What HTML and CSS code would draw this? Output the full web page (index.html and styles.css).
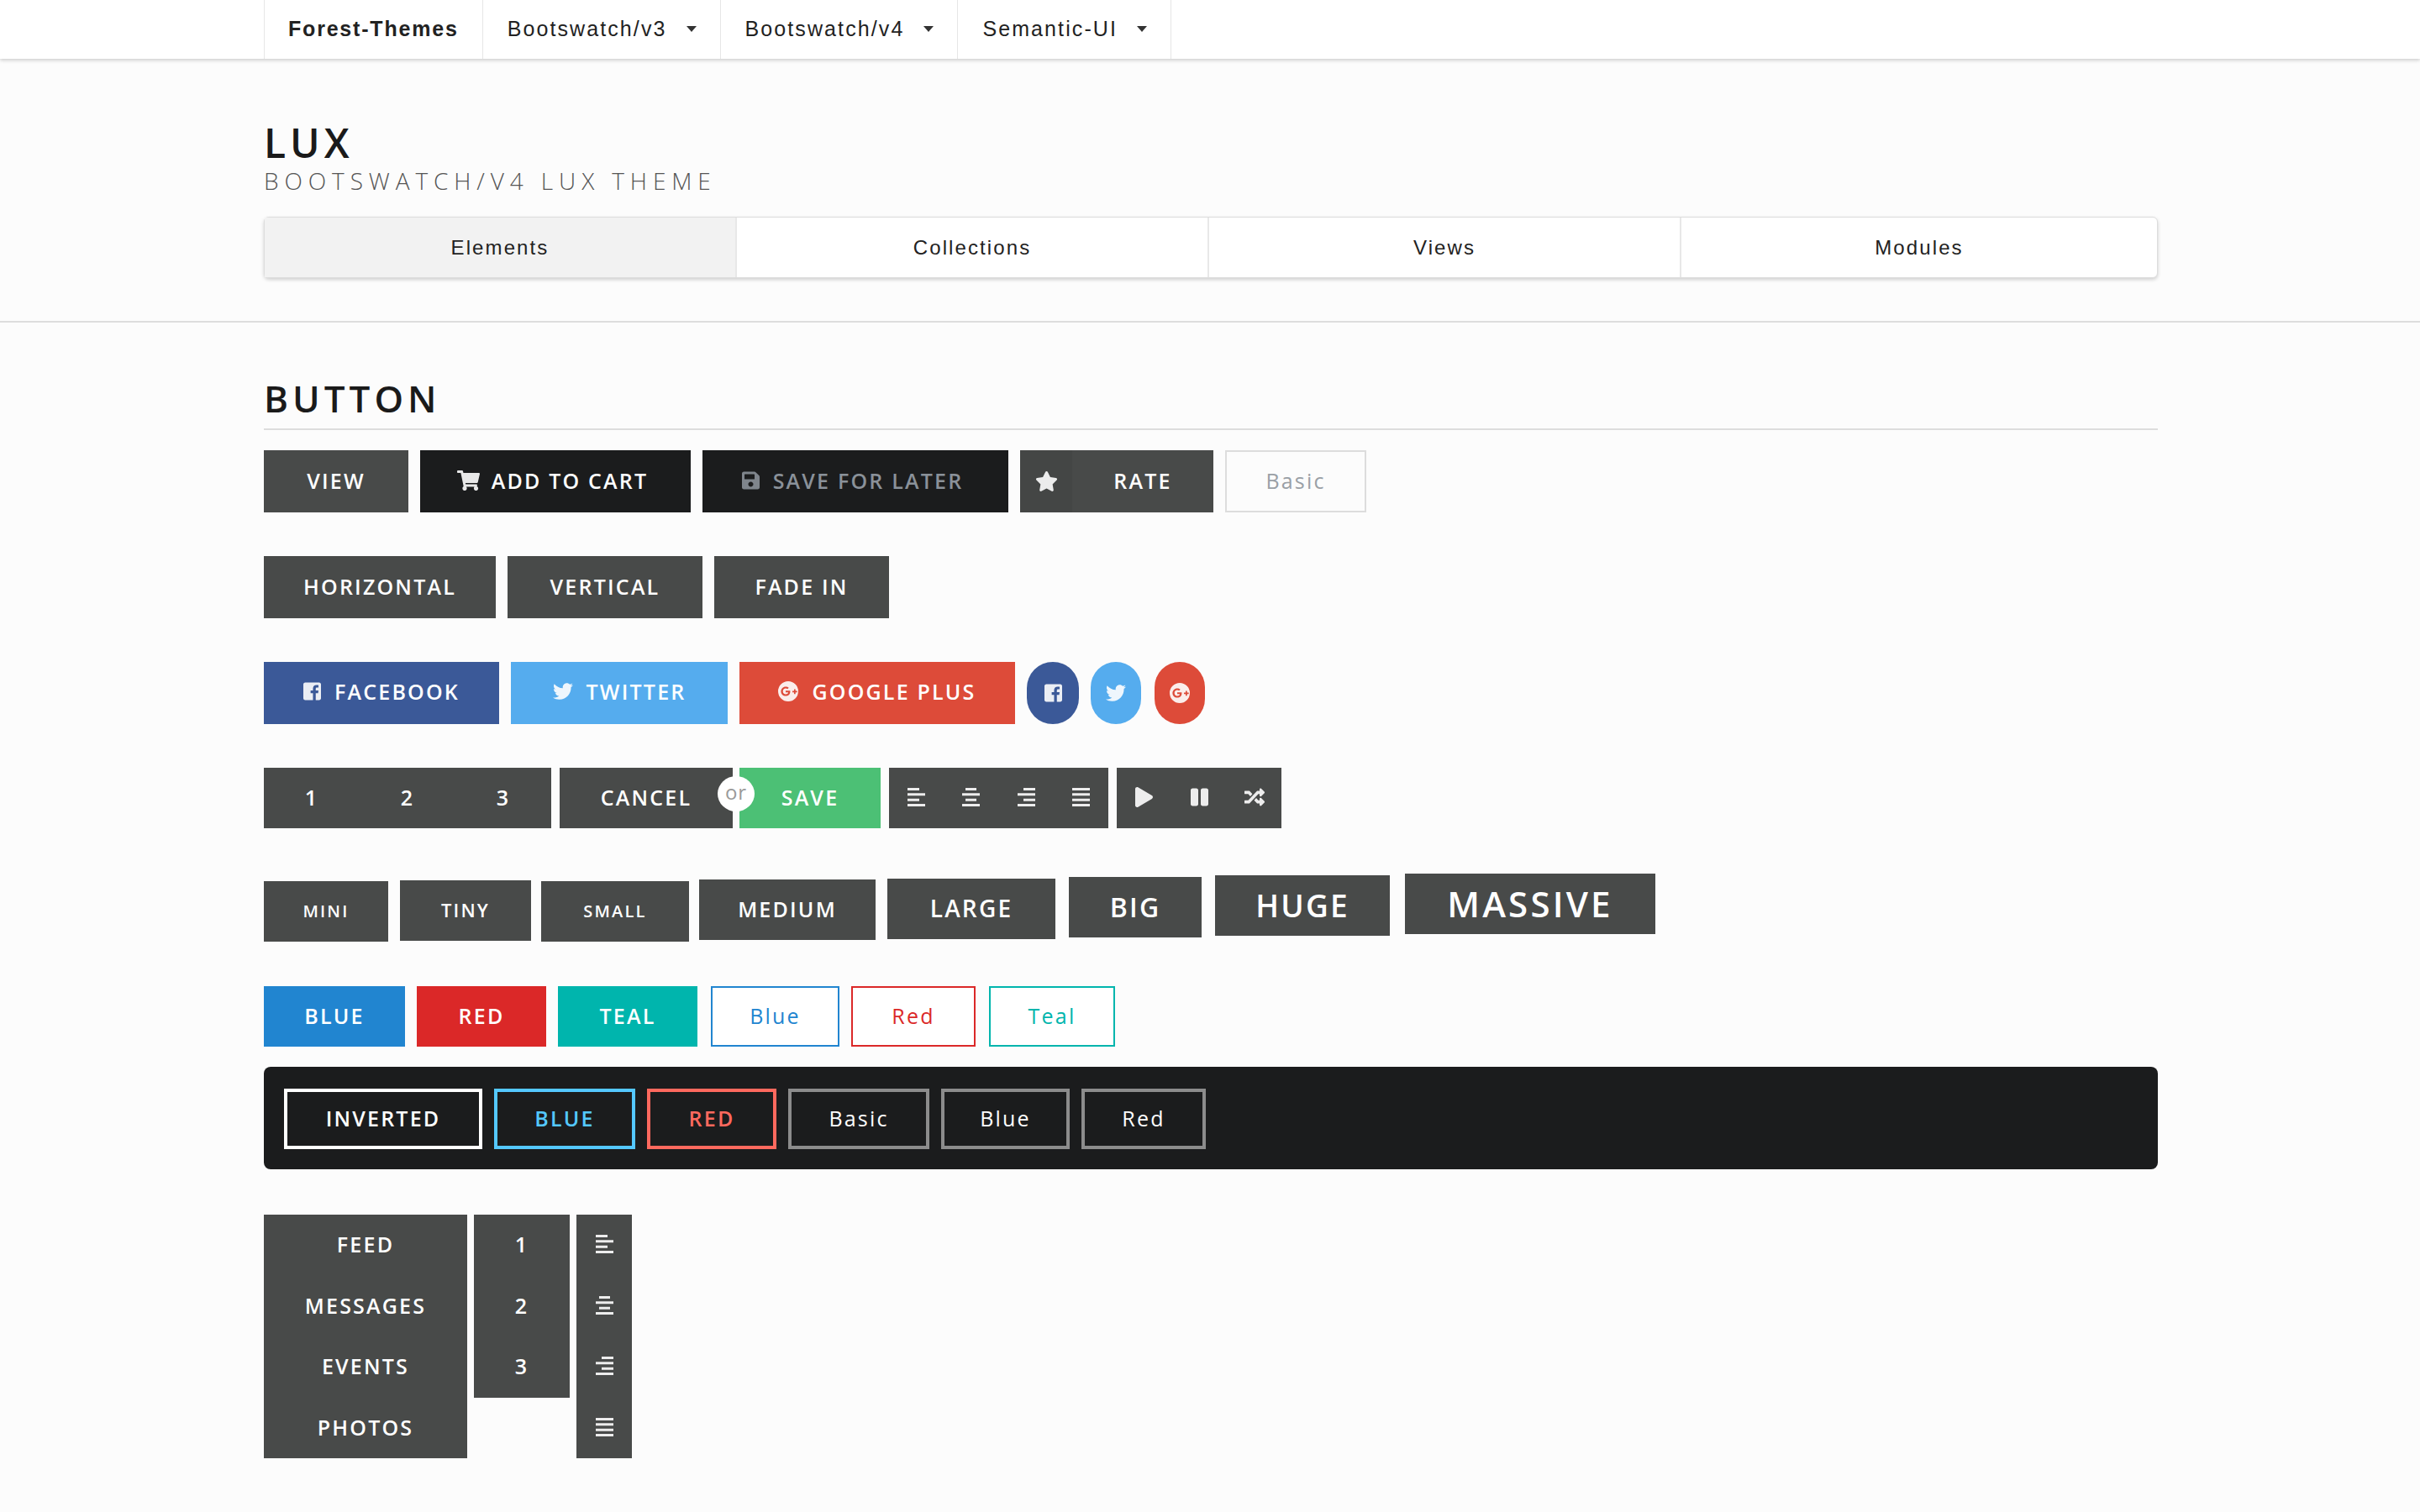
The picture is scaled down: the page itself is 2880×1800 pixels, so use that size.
FILE: index.html
```html
<!DOCTYPE html>
<html lang="en">
<head>
    <meta charset="UTF-8">
    <title>Lux - Bootswatch/v4 theme</title>
    <link rel="stylesheet" href="styles.css">
</head>
<body>
    <svg class="defs" width="0" height="0">
        <symbol id="i-cart" viewBox="0 0 576 512"><path d="M528.12 301.319l47.273-208C578.806 78.301 567.391 64 551.99 64H159.208l-9.166-44.81C147.758 8.021 137.93 0 126.529 0H24C10.745 0 0 10.745 0 24v16c0 13.255 10.745 24 24 24h69.883l70.248 343.435C147.325 417.1 136 435.222 136 456c0 30.928 25.072 56 56 56s56-25.072 56-56c0-15.674-6.447-29.835-16.824-40h209.647C430.447 426.165 424 440.326 424 456c0 30.928 25.072 56 56 56s56-25.072 56-56c0-22.172-12.888-41.332-31.579-50.405l5.517-24.276c3.413-15.018-8.002-29.319-23.403-29.319H218.117l-6.545-32h293.145c11.206 0 20.92-7.754 23.403-18.681z"/></symbol>
        <symbol id="i-save" viewBox="0 0 448 512"><path d="M433.941 129.941l-83.882-83.882A48 48 0 0 0 316.118 32H48C21.49 32 0 53.49 0 80v352c0 26.51 21.49 48 48 48h352c26.51 0 48-21.49 48-48V163.882a48 48 0 0 0-14.059-33.941zM224 416c-35.346 0-64-28.654-64-64 0-35.346 28.654-64 64-64s64 28.654 64 64c0 35.346-28.654 64-64 64zm96-304.52V212c0 6.627-5.373 12-12 12H76c-6.627 0-12-5.373-12-12V108c0-6.627 5.373-12 12-12h228.52c3.183 0 6.235 1.264 8.485 3.515l3.48 3.48A11.996 11.996 0 0 1 320 111.48z"/></symbol>
        <symbol id="i-star" viewBox="0 0 576 512"><path d="M259.3 17.8L194 150.2 47.9 171.5c-26.2 3.8-36.7 36.1-17.7 54.6l105.7 103-25 145.5c-4.5 26.3 23.2 46 46.4 33.7L288 439.6l130.7 68.7c23.2 12.2 50.9-7.4 46.4-33.7l-25-145.5 105.7-103c19-18.5 8.5-50.8-17.7-54.6L382 150.2 316.7 17.8c-11.7-23.6-45.6-23.9-57.4 0z"/></symbol>
        <symbol id="i-fb" viewBox="0 0 448 512"><path d="M448 80v352c0 26.5-21.5 48-48 48h-85.3V302.8h60.6l8.7-67.6h-69.3V192c0-19.6 5.4-32.9 33.5-32.9H384V98.7c-6.2-.8-27.4-2.7-52.2-2.7-51.6 0-87 31.5-87 89.4v49.9H184v67.6h60.9V480H48c-26.5 0-48-21.5-48-48V80c0-26.5 21.5-48 48-48h352c26.5 0 48 21.5 48 48z"/></symbol>
        <symbol id="i-tw" viewBox="0 0 512 512"><path d="M459.37 151.716c.325 4.548.325 9.097.325 13.645 0 138.72-105.583 298.558-298.558 298.558-59.452 0-114.68-17.219-161.137-47.106 8.447.974 16.568 1.299 25.34 1.299 49.055 0 94.213-16.568 130.274-44.832-46.132-.975-84.792-31.188-98.112-72.772 6.498.974 12.995 1.624 19.818 1.624 9.421 0 18.843-1.3 27.614-3.573-48.081-9.747-84.143-51.98-84.143-102.985v-1.299c13.969 7.797 30.214 12.67 47.431 13.319-28.264-18.843-46.781-51.005-46.781-87.391 0-19.492 5.197-37.36 14.294-52.954 51.655 63.675 129.3 105.258 216.365 109.807-1.624-7.797-2.599-15.918-2.599-24.04 0-57.828 46.782-104.934 104.934-104.934 30.213 0 57.502 12.67 76.67 33.137 23.715-4.548 46.456-13.32 66.599-25.34-7.798 24.366-24.366 44.833-46.132 57.827 21.117-2.273 41.584-8.122 60.426-16.243-14.292 20.791-32.161 39.308-52.628 54.253z"/></symbol>
        <symbol id="i-gp" viewBox="0 0 24 24"><path fill-rule="evenodd" d="M12 0a12 12 0 1 0 0 24a12 12 0 0 0 0-24zM9 6.4c1.5 0 2.7.5 3.7 1.4l-1.500 1.500c-.6-.5-1.300-.8-2.200-.8-1.800 0-3.300 1.500-3.300 3.500s1.500 3.500 3.300 3.500c1.800 0 2.800-1 3-2.300H9v-2h5.300c.1.300.1.600.1 1 0 3.300-2.200 5.400-5.400 5.400-3.100 0-5.600-2.500-5.600-5.600S5.900 6.400 9 6.400zM19 9.500h1.700v2h2v1.700h-2v2H19v-2h-2v-1.700h2z"/></symbol>
        <symbol id="i-left" viewBox="0 0 21 22"><path d="M0 0h14v3H0zM0 6.300h21v3H0zM0 12.700h14v3H0zM0 19h21v3H0z"/></symbol>
        <symbol id="i-center" viewBox="0 0 21 22"><path d="M4 0h13v3H4zM0 6.300h21v3H0zM4 12.700h13v3H4zM0 19h21v3H0z"/></symbol>
        <symbol id="i-right" viewBox="0 0 21 22"><path d="M7 0h14v3H7zM0 6.300h21v3H0zM7 12.700h14v3H7zM0 19h21v3H0z"/></symbol>
        <symbol id="i-just" viewBox="0 0 21 22"><path d="M0 0h21v3H0zM0 6.300h21v3H0zM0 12.700h21v3H0zM0 19h21v3H0z"/></symbol>
        <symbol id="i-play" viewBox="0 0 448 512"><path d="M424.4 214.700L72.400 6.600C43.800-10.300 0 6.100 0 47.900V464c0 37.500 40.700 60.100 72.400 41.300l352-208c31.400-18.500 31.500-64.100 0-82.600z"/></symbol>
        <symbol id="i-pause" viewBox="0 0 448 512"><path d="M144 479H48c-26.500 0-48-21.500-48-48V79c0-26.500 21.500-48 48-48h96c26.500 0 48 21.500 48 48v352c0 26.500-21.500 48-48 48zm304-48V79c0-26.500-21.500-48-48-48h-96c-26.500 0-48 21.500-48 48v352c0 26.500 21.500 48 48 48h96c26.500 0 48-21.500 48-48z"/></symbol>
        <symbol id="i-shuffle" viewBox="0 0 512 512"><path d="M504.971 359.029c9.373 9.373 9.373 24.569 0 33.941l-80 79.984c-15.01 15.01-40.971 4.49-40.971-16.971V416h-58.785a12.004 12.004 0 0 1-8.773-3.812l-70.556-75.596 53.333-57.143L352 336h32v-39.981c0-21.438 25.943-31.998 40.971-16.971l80 79.981zM12 176h84l52.781 56.551 53.333-57.143-70.556-75.596A11.999 11.999 0 0 0 122.785 96H12c-6.627 0-12 5.373-12 12v56c0 6.627 5.373 12 12 12zm372 0v39.984c0 21.46 25.961 31.98 40.971 16.971l80-79.984c9.373-9.373 9.373-24.569 0-33.941l-80-79.981C409.943 24.021 384 34.582 384 56.019V96h-58.785a12.004 12.004 0 0 0-8.773 3.812L96 336H12c-6.627 0-12 5.373-12 12v56c0 6.627 5.373 12 12 12h110.785c3.326 0 6.503-1.381 8.773-3.812L352 176h32z"/></symbol>
    </svg>

    <nav class="topbar">
        <div class="topbar-inner">
            <a class="nav-item brand">Forest-Themes</a>
            <a class="nav-item">Bootswatch/v3<span class="caret"></span></a>
            <a class="nav-item">Bootswatch/v4<span class="caret"></span></a>
            <a class="nav-item">Semantic-UI<span class="caret"></span></a>
        </div>
    </nav>

    <header class="masthead">
        <div class="container">
            <h1>LUX</h1>
            <p class="subtitle">BOOTSWATCH/V4 LUX THEME</p>
            <div class="tabs">
                <a class="tab active">Elements</a>
                <a class="tab">Collections</a>
                <a class="tab">Views</a>
                <a class="tab">Modules</a>
            </div>
        </div>
    </header>

    <main class="container">
        <h2 class="section-title">BUTTON</h2>

        <div class="row">
            <a class="btn w172">VIEW</a>
            <a class="btn w322 black"><svg class="icon wide"><use href="#i-cart"/></svg>ADD TO CART</a>
            <a class="btn w364 black muted"><svg class="icon"><use href="#i-save"/></svg>SAVE FOR LATER</a>
            <a class="btn w230 labeled"><span class="label-box"><svg class="icon wide"><use href="#i-star"/></svg></span><span class="label-text">RATE</span></a>
            <a class="btn w168 basic">Basic</a>
        </div>

        <div class="row">
            <a class="btn w276">HORIZONTAL</a>
            <a class="btn w232">VERTICAL</a>
            <a class="btn w208">FADE IN</a>
        </div>

        <div class="row social">
            <a class="btn w280 facebook"><svg class="icon"><use href="#i-fb"/></svg>FACEBOOK</a>
            <a class="btn w258 twitter"><svg class="icon mid"><use href="#i-tw"/></svg>TWITTER</a>
            <a class="btn w328 gplus"><svg class="icon mid"><use href="#i-gp"/></svg>GOOGLE PLUS</a>
            <a class="btn circle w62 facebook"><svg class="icon"><use href="#i-fb"/></svg></a>
            <a class="btn circle w60 twitter"><svg class="icon mid"><use href="#i-tw"/></svg></a>
            <a class="btn circle w60 gplus push"><svg class="icon mid"><use href="#i-gp"/></svg></a>
        </div>

        <div class="row groups">
            <div class="group">
                <a class="btn w114">1</a><a class="btn w114">2</a><a class="btn w114">3</a>
            </div>
            <div class="group pair">
                <a class="btn w206">CANCEL</a>
                <span class="or">or</span>
                <a class="btn w168 positive">SAVE</a>
            </div>
            <div class="group">
                <a class="btn w65"><svg class="icon align"><use href="#i-left"/></svg></a>
                <a class="btn w65"><svg class="icon align"><use href="#i-center"/></svg></a>
                <a class="btn w65"><svg class="icon align"><use href="#i-right"/></svg></a>
                <a class="btn w65"><svg class="icon align"><use href="#i-just"/></svg></a>
            </div>
            <div class="group media">
                <a class="btn w65"><svg class="icon align"><use href="#i-play"/></svg></a>
                <a class="btn w65"><svg class="icon align"><use href="#i-pause"/></svg></a>
                <a class="btn w65"><svg class="icon align"><use href="#i-shuffle"/></svg></a>
            </div>
        </div>

        <div class="row sizes">
            <a class="btn w148 mini">MINI</a>
            <a class="btn w156 tiny">TINY</a>
            <a class="btn w176 small">SMALL</a>
            <a class="btn w210 medium">MEDIUM</a>
            <a class="btn w200 large">LARGE</a>
            <a class="btn w158 big">BIG</a>
            <a class="btn w208 huge">HUGE</a>
            <a class="btn w298 massive">MASSIVE</a>
        </div>

        <div class="row colors">
            <a class="btn w168 blue">BLUE</a>
            <a class="btn w154 red">RED</a>
            <a class="btn w166 teal">TEAL</a>
            <a class="btn w153 outline o-blue push">Blue</a>
            <a class="btn w148 outline o-red">Red</a>
            <a class="btn w150 outline o-teal push">Teal</a>
        </div>

        <div class="segment">
            <a class="btn w236 inv">INVERTED</a>
            <a class="btn w168 inv inv-blue">BLUE</a>
            <a class="btn w154 inv inv-red">RED</a>
            <a class="btn w168 inv inv-grey">Basic</a>
            <a class="btn w153 inv inv-grey">Blue</a>
            <a class="btn w148 inv inv-grey">Red</a>
        </div>

        <div class="row verticals">
            <div class="vgroup">
                <a class="btn w242">FEED</a><a class="btn w242">MESSAGES</a><a class="btn w242">EVENTS</a><a class="btn w242">PHOTOS</a>
            </div>
            <div class="vgroup">
                <a class="btn w114">1</a><a class="btn w114">2</a><a class="btn w114">3</a>
            </div>
            <div class="vgroup">
                <a class="btn w66"><svg class="icon align"><use href="#i-left"/></svg></a>
                <a class="btn w66"><svg class="icon align"><use href="#i-center"/></svg></a>
                <a class="btn w66"><svg class="icon align"><use href="#i-right"/></svg></a>
                <a class="btn w66"><svg class="icon align"><use href="#i-just"/></svg></a>
            </div>
        </div>
    </main>
</body>
</html>
```

FILE: styles.css
```css
html, body {
    margin: 0;
    padding: 0;
    height: 1800px;
    overflow: hidden;
}
body {
    background: #fcfcfc;
    color: #1a1a1a;
    font-family: "Open Sans", "Noto Sans", sans-serif;
}
.defs {
    position: absolute;
}
.container {
    width: 2254px;
    margin-left: 314px;
}

/* top bar */
.topbar {
    height: 70px;
    background: #fff;
    box-shadow: 0 2px 4px rgba(0, 0, 0, 0.18);
    padding-left: 314px;
}
.topbar-inner {
    display: flex;
    height: 100%;
}
.nav-item {
    display: flex;
    align-items: center;
    padding: 0 28px 2px 29px;
    border-left: 1px solid #e6e6e6;
    font-family: "Liberation Sans", Arial, sans-serif;
    font-size: 25px;
    letter-spacing: 2.1px;
    color: #222;
}
.nav-item:last-child {
    border-right: 1px solid #e6e6e6;
}
.brand {
    font-weight: bold;
    letter-spacing: 1.8px;
    padding-left: 28px;
}
.caret {
    width: 0;
    height: 0;
    margin-left: 23px;
    border-top: 7px solid #333;
    border-left: 6px solid transparent;
    border-right: 6px solid transparent;
}

/* heading */
.masthead {
    height: 312px;
    border-bottom: 2px solid #ddd;
}
h1 {
    margin: 0;
    padding-top: 75px;
    font-size: 48px;
    line-height: 50px;
    font-weight: 600;
    letter-spacing: 5px;
}
.subtitle {
    margin: 4px 0 0;
    font-size: 28px;
    line-height: 32px;
    font-weight: 300;
    letter-spacing: 6.9px;
    color: #555;
}
.tabs {
    display: flex;
    height: 73px;
    margin-top: 27px;
    background: #fff;
    border: 1px solid #ddd;
    border-radius: 6px;
    box-shadow: 0 2px 4px rgba(0, 0, 0, 0.18);
    box-sizing: border-box;
}
.tab {
    flex: none;
    width: 562px;
    box-sizing: border-box;
    display: flex;
    align-items: center;
    justify-content: center;
    border-right: 2px solid #e8e8e8;
    font-family: "Liberation Sans", Arial, sans-serif;
    font-size: 24px;
    letter-spacing: 2.1px;
    color: #222;
}
.tab:last-child {
    flex: 1;
    border-right: 0;
}
.tab.active {
    background: #f2f2f2;
}

.section-title {
    margin: 0;
    padding-top: 60px;
    height: 66px;
    font-size: 44px;
    line-height: 60px;
    font-weight: 600;
    letter-spacing: 5px;
    border-bottom: 2px solid #ddd;
}

/* buttons */
.row {
    display: flex;
    gap: 14px;
    margin-bottom: 52px;
}
.section-title + .row {
    margin-top: 24px;
}
.btn {
    display: flex;
    flex: none;
    align-items: center;
    justify-content: center;
    box-sizing: border-box;
    height: 74px;
    padding-bottom: 2px;
    background: #484a49;
    color: #fff;
    font-size: 25px;
    font-weight: 600;
    letter-spacing: 2.2px;
    white-space: nowrap;
}
.w60 { width: 60px; }
.w62 { width: 62px; }
.w65 { width: 65.34px; }
.w66 { width: 66px; }
.w114 { width: 114px; }
.w148 { width: 148px; }
.w150 { width: 150px; }
.w153 { width: 153px; }
.w154 { width: 154px; }
.w156 { width: 156px; }
.w158 { width: 158px; }
.w166 { width: 166px; }
.w168 { width: 168px; }
.w172 { width: 172px; }
.w176 { width: 176px; }
.w200 { width: 200px; }
.w206 { width: 206px; }
.w208 { width: 208px; }
.w210 { width: 210px; }
.w230 { width: 230px; }
.w232 { width: 232px; }
.w236 { width: 236px; }
.w242 { width: 242px; }
.w258 { width: 258px; }
.w276 { width: 276px; }
.w280 { width: 280px; }
.w298 { width: 298px; }
.w322 { width: 322px; }
.w328 { width: 328px; }
.w364 { width: 364px; }

.icon {
    flex: none;
    width: 21px;
    height: 24px;
    margin-right: 16px;
    fill: currentColor;
    opacity: 0.9;
}
.icon.wide { width: 27px; margin-right: 14px; }
.icon.mid { width: 24px; }
.black {
    background: #1b1c1d;
    padding-right: 7px;
}
.muted { color: #8a9199; }
.labeled {
    justify-content: flex-start;
    padding-bottom: 0;
}
.label-box {
    display: flex;
    align-items: center;
    justify-content: center;
    width: 62px;
    height: 100%;
    background: rgba(0, 0, 0, 0.05);
}
.label-box .icon { margin: 0; }
.label-text {
    flex: 1;
    padding-bottom: 2px;
    text-align: center;
}
.basic {
    background: transparent;
    border: 2px solid #ddd;
    color: #9aa0a6;
    font-weight: 400;
}
.social .btn { padding-bottom: 4px; }
.facebook { background: #3b5998; }
.twitter { background: #55acee; }
.gplus { background: #dd4b39; }
.social .circle {
    padding-bottom: 0;
    border-radius: 31px;
}
.circle .icon { margin: 0; }
.positive { background: #4cc075; }

.groups {
    gap: 10px;
    margin-bottom: 54px;
}
.groups .btn { height: 72px; }
.group {
    display: flex;
    position: relative;
}
.pair { gap: 8px; }
.or {
    position: absolute;
    left: 188px;
    top: 10px;
    width: 44px;
    height: 42px;
    line-height: 38px;
    border-radius: 50%;
    background: #fff;
    color: #9a9a9a;
    text-align: center;
    font-size: 24px;
    letter-spacing: 1px;
}
.icon.align {
    width: 21px;
    height: 22px;
    margin: 0;
}
.media .icon.align { height: 24px; }
.media .btn:last-child .icon.align { width: 24px; }

.sizes {
    align-items: baseline;
    gap: 0;
    margin-bottom: 53px;
}
.sizes .btn { height: 72px; }
.sizes .mini { font-size: 20px; margin-right: 14px; }
.sizes .tiny { font-size: 22px; margin-right: 12px; }
.sizes .small { font-size: 20px; margin-right: 12px; }
.sizes .medium { font-size: 25px; margin-right: 14px; }
.sizes .large { font-size: 28px; margin-right: 16px; }
.sizes .big { font-size: 32px; margin-right: 16px; }
.sizes .huge { font-size: 37px; margin-right: 18px; }
.sizes .massive { font-size: 42px; letter-spacing: 3.2px; }

.colors { margin-bottom: 24px; }
.colors .btn { height: 72px; }
.blue { background: #2185d0; }
.red { background: #db2828; }
.teal { background: #00b5ad; }
.outline {
    background: #fff;
    border: 2px solid;
    font-weight: 400;
}
.push { margin-left: 2px; }
.o-blue { border-color: #2185d0; color: #2185d0; }
.o-red { border-color: #db2828; color: #db2828; }
.o-teal { border-color: #00b5ad; color: #00b5ad; }

.segment {
    display: flex;
    gap: 14px;
    padding: 26px 24px 24px;
    margin-bottom: 54px;
    background: #1b1c1d;
    border-radius: 8px;
}
.inv {
    height: 72px;
    background: transparent;
    border: 4px solid #fff;
}
.inv-blue { border-color: #54c8ff; color: #54c8ff; }
.inv-red { border-color: #ff695e; color: #ff695e; }
.inv-grey { border-color: #8c8c8c; font-weight: 400; }

.verticals {
    align-items: flex-start;
    gap: 8px;
}
.vgroup {
    display: flex;
    flex-direction: column;
}
.vgroup .btn { height: 72.5px; }
```
